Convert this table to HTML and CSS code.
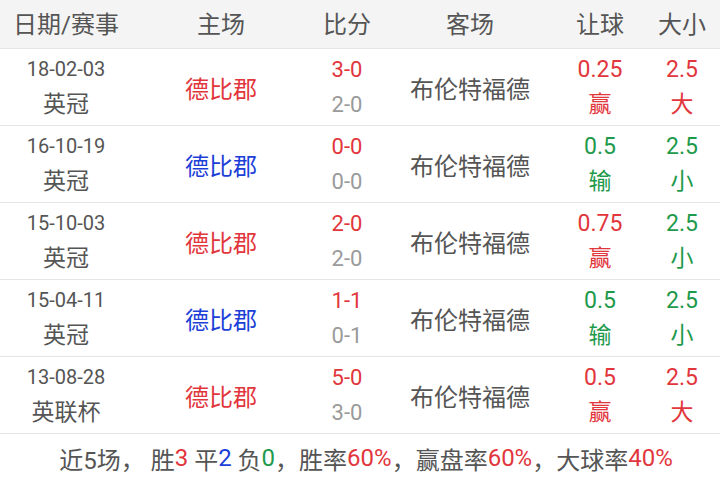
FILE: index.html
```html
<!DOCTYPE html>
<html lang="zh">
<head>
<meta charset="utf-8">
<link rel="stylesheet" href="styles.css">
</head>
<body>
<div class="table">
  <div class="row head">
    <div>日期/赛事</div><div>主场</div><div>比分</div><div>客场</div><div>让球</div><div>大小</div>
  </div>
  <div class="row">
    <div class="cell two"><span class="date">18-02-03</span><span class="lg">英冠</span></div>
    <div class="cell team red">德比郡</div>
    <div class="cell two"><span class="sc red">3-0</span><span class="sc gray">2-0</span></div>
    <div class="cell team">布伦特福德</div>
    <div class="cell two red"><span>0.25</span><span class="res">赢</span></div>
    <div class="cell two red"><span>2.5</span><span class="res">大</span></div>
  </div>
  <div class="row">
    <div class="cell two"><span class="date">16-10-19</span><span class="lg">英冠</span></div>
    <div class="cell team blue">德比郡</div>
    <div class="cell two"><span class="sc red">0-0</span><span class="sc gray">0-0</span></div>
    <div class="cell team">布伦特福德</div>
    <div class="cell two green"><span>0.5</span><span class="res">输</span></div>
    <div class="cell two green"><span>2.5</span><span class="res">小</span></div>
  </div>
  <div class="row">
    <div class="cell two"><span class="date">15-10-03</span><span class="lg">英冠</span></div>
    <div class="cell team red">德比郡</div>
    <div class="cell two"><span class="sc red">2-0</span><span class="sc gray">2-0</span></div>
    <div class="cell team">布伦特福德</div>
    <div class="cell two red"><span>0.75</span><span class="res">赢</span></div>
    <div class="cell two green"><span>2.5</span><span class="res">小</span></div>
  </div>
  <div class="row">
    <div class="cell two"><span class="date">15-04-11</span><span class="lg">英冠</span></div>
    <div class="cell team blue">德比郡</div>
    <div class="cell two"><span class="sc red">1-1</span><span class="sc gray">0-1</span></div>
    <div class="cell team">布伦特福德</div>
    <div class="cell two green"><span>0.5</span><span class="res">输</span></div>
    <div class="cell two green"><span>2.5</span><span class="res">小</span></div>
  </div>
  <div class="row">
    <div class="cell two"><span class="date">13-08-28</span><span class="lg">英联杯</span></div>
    <div class="cell team red">德比郡</div>
    <div class="cell two"><span class="sc red">5-0</span><span class="sc gray">3-0</span></div>
    <div class="cell team">布伦特福德</div>
    <div class="cell two red"><span>0.5</span><span class="res">赢</span></div>
    <div class="cell two red"><span>2.5</span><span class="res">大</span></div>
  </div>
  <div class="foot">近5场， 胜<span class="red">3</span> 平<span class="blue">2</span> 负<span class="green">0</span>，胜率<span class="red">60%</span>，赢盘率<span class="red">60%</span>，大球率<span class="red">40%</span></div>
</div>
</body>
</html>
```

FILE: styles.css
```css
html, body {
  margin: 0;
  padding: 0;
  background: #fff;
}
body {
  font-family: Roboto, "Noto Sans CJK SC", sans-serif;
  color: #555;
}
.table {
  width: 720px;
}
.row {
  display: grid;
  grid-template-columns: 132px 178px 74px 172px 88px 76px;
  border-bottom: 1px solid #e6e6e6;
  height: 76px;
}
.row.head {
  height: 48px;
  background: #f4f4f4;
  font-size: 24px;
  color: #555;
}
.row.head > div {
  display: flex;
  align-items: center;
  justify-content: center;
  padding-bottom: 3px;
}
.cell {
  display: flex;
  align-items: center;
  justify-content: center;
  font-size: 23px;
}
.cell.team {
  font-size: 24px;
}
.cell.two {
  flex-direction: column;
  line-height: 35px;
}
.date {
  font-size: 20px;
  color: #555;
}
.lg {
  font-size: 23px;
  color: #555;
}
.sc {
  font-size: 22px;
}
.res {
  font-size: 23px;
}
.red { color: #e2363d; }
.blue { color: #1c3fd8; }
.green { color: #1e9a4c; }
.gray { color: #9a9a9a; }
.foot {
  height: 48px;
  display: flex;
  align-items: center;
  justify-content: center;
  padding-left: 12px;
  font-size: 24px;
  color: #555;
  white-space: pre;
}
```
